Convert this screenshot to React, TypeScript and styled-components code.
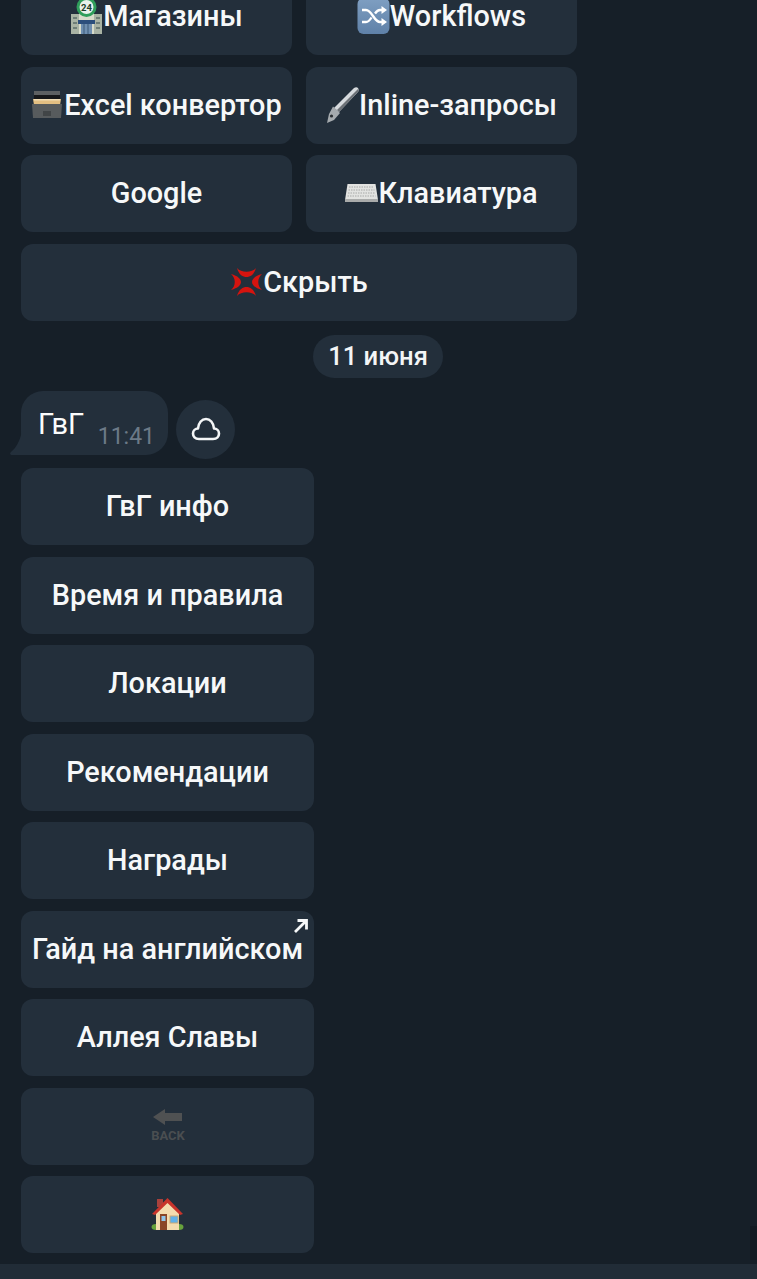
import React from "react";
import styled, { createGlobalStyle } from "styled-components";

const GlobalStyle = createGlobalStyle`
  html, body {
    margin: 0;
    padding: 0;
    background: #161f28;
  }
  * {
    box-sizing: border-box;
  }
`;

const Page = styled.div`
  position: relative;
  width: 757px;
  height: 1279px;
  display: flex;
  flex-direction: column;
  overflow: hidden;
  background: #161f28;
  font-family: Roboto, "Liberation Sans", sans-serif;
  color: #fff;
`;

const Feed = styled.div`
  flex: 1;
  min-height: 0;
  margin-top: -21.75px;
  padding-left: 21px;
  display: flex;
  flex-direction: column;
`;

const Keyboard = styled.div<{ $width: number }>`
  width: ${({ $width }) => $width}px;
  display: flex;
  flex-direction: column;
  gap: 11.5px;
`;

const KeyRow = styled.div`
  display: flex;
  gap: 14px;
`;

const KeyButton = styled.div`
  position: relative;
  flex: 1 1 0;
  min-width: 0;
  height: 77px;
  padding-bottom: 1px;
  display: flex;
  align-items: center;
  justify-content: center;
  background: #232f3b;
  border-radius: 12px;
  font-size: 28.85px;
  font-weight: 500;
  white-space: nowrap;
  color: #f6f8f9;
`;

const Glyph = styled.svg`
  flex: none;
  display: block;
  width: 33px;
  height: 38px;
`;

const Corner = styled.svg`
  position: absolute;
  top: 7px;
  right: 5px;
  width: 16px;
  height: 16px;
`;

const DateRow = styled.div`
  width: 714px;
  margin-top: 14px;
  display: flex;
  justify-content: center;
`;

const DatePill = styled.div`
  height: 43px;
  width: 130px;
  display: flex;
  align-items: center;
  justify-content: center;
  border-radius: 22px;
  background: #232f3b;
  font-size: 25.6px;
  font-weight: 500;
  color: #f3f5f6;
`;

const MessageRow = styled.div`
  height: 68px;
  margin-top: 13px;
  margin-bottom: 9.5px;
  display: flex;
  align-items: flex-start;
  gap: 8px;
`;

const Bubble = styled.div`
  position: relative;
  width: 147px;
  height: 64px;
  padding: 16px 13px 0 17px;
  display: flex;
  justify-content: space-between;
  background: #232f3b;
  border-radius: 22px 22px 22px 0;
`;

const BubbleTail = styled.svg`
  position: absolute;
  left: -11px;
  bottom: 0;
  width: 12px;
  height: 24px;
`;

const MessageText = styled.span`
  font-size: 29px;
  line-height: 34px;
  color: #fbfcfc;
`;

const MessageTime = styled.span`
  margin-top: 15px;
  font-size: 23px;
  line-height: 30px;
  color: #6c7a87;
`;

const CloudButton = styled.div`
  width: 59px;
  height: 59px;
  margin-top: 9px;
  display: flex;
  align-items: center;
  justify-content: center;
  border-radius: 50%;
  background: #232f3b;
`;

const CloudIcon = styled.svg`
  width: 30px;
  height: 24px;
`;

const BackIcon = styled.svg`
  width: 36px;
  height: 34px;
`;

const BottomBar = styled.div`
  flex: none;
  height: 15px;
  background: #212c37;
`;

const ScrollMark = styled.div`
  position: absolute;
  right: 0;
  top: 1226px;
  width: 7px;
  height: 34px;
  background: #121a22;
`;

const StoreGlyph = () => (
  <Glyph viewBox="0 0 33 38">
    <rect x="1" y="17" width="31" height="20" fill="#a9b3a4" />
    <rect x="9" y="13" width="15" height="24" fill="#d8dccb" />
    <g fill="#6f7f78">
      <rect x="3" y="20" width="4" height="2" />
      <rect x="3" y="25" width="4" height="2" />
      <rect x="3" y="30" width="4" height="2" />
      <rect x="26" y="20" width="4" height="2" />
      <rect x="26" y="25" width="4" height="2" />
      <rect x="26" y="30" width="4" height="2" />
    </g>
    <rect x="8" y="23" width="17" height="4" fill="#2c4f7c" />
    <rect x="11" y="27" width="11" height="10" fill="#6f8fb0" />
    <path d="M14 27v10M18 27v10" stroke="#3d5a78" strokeWidth="1" />
    <circle cx="16.5" cy="10" r="10" fill="#2f9e5b" />
    <circle cx="16.5" cy="10" r="7" fill="#e9f1ec" />
    <text x="16.5" y="13.5" textAnchor="middle" fontSize="9.5" fontWeight="700" fontFamily="Roboto, sans-serif" fill="#1d3d2a">24</text>
  </Glyph>
);

const ShuffleGlyph = () => (
  <Glyph viewBox="0 0 33 38">
    <defs>
      <linearGradient id="shuffleFill" x1="0" y1="0" x2="0" y2="1">
        <stop offset="0" stopColor="#7f9fc2" />
        <stop offset="1" stopColor="#5f81a8" />
      </linearGradient>
    </defs>
    <rect x="0.5" y="1" width="32" height="36" rx="6" fill="url(#shuffleFill)" />
    <path d="M5 13h4c6 0 8 12 14 12h3M5 25h4c2.500 0 4-2 5.500-4.500M18 16.500c1.400-2 3-3.500 5-3.500h3" fill="none" stroke="#fff" strokeWidth="2.400" />
    <path d="M24.500 9l5.500 4-5.500 4zM24.500 21l5.500 4-5.500 4z" fill="#fff" />
  </Glyph>
);

const CardBoxGlyph = () => (
  <Glyph viewBox="0 0 33 38">
    <rect x="3" y="5" width="26" height="5" fill="#5d6062" />
    <rect x="3" y="9" width="26" height="4" fill="#17181a" />
    <path d="M2 13h28l-1 6H3z" fill="#e3bf82" />
    <path d="M3 13h26v1.500H3z" fill="#f0dcb4" />
    <path d="M1 18h30l-1 14H2z" fill="#575b5d" />
    <rect x="12" y="25" width="8" height="5" fill="#414547" />
  </Glyph>
);

const PenGlyph = () => (
  <Glyph viewBox="0 0 33 38">
    <path d="M32 2 C33 4 33 5 31 7 L13 26 L8 22 L28 2 C29.500 1 31 1 32 2 Z" fill="#d6dadd" />
    <path d="M32 3 C33 5 33 5.500 31 7 L13 26 L11 24 Z" fill="#6c7176" />
    <path d="M7 20.500 L14 27 L8 34 L1 37 L3 28 Z" fill="#a5aaae" />
    <circle cx="5.500" cy="30" r="1.600" fill="#2b2f33" />
  </Glyph>
);

const KeyboardGlyph = () => (
  <Glyph viewBox="0 0 33 38">
    <path d="M2.500 10h28l2.500 16H0z" fill="#e2e3e1" />
    <rect x="0" y="25" width="33" height="3" fill="#a9abaa" />
    <path d="M4 13h25M3.500 16h26M3 19h27M2.500 22h28" stroke="#a7a9a8" strokeWidth="1" strokeDasharray="1.500 1" fill="none" />
  </Glyph>
);

const AngerGlyph = () => (
  <Glyph viewBox="0 0 33 38">
    <g fill="#d5140f">
      <path d="M7 5 C11 10 22 10 26 5 C24 12 20 14 16.500 14 C13 14 9 12 7 5 Z" />
      <path d="M7 33 C11 28 22 28 26 33 C24 26 20 24 16.500 24 C13 24 9 26 7 33 Z" />
      <path d="M1 11 C6 15 6 23 1 27 C8 25 11 22 11 19 C11 16 8 13 1 11 Z" />
      <path d="M32 11 C27 15 27 23 32 27 C25 25 22 22 22 19 C22 16 25 13 32 11 Z" />
    </g>
  </Glyph>
);

const HouseGlyph = () => (
  <Glyph viewBox="0 0 33 38">
    <rect x="6" y="4" width="6" height="8" fill="#a8413c" />
    <ellipse cx="5" cy="32" rx="4.500" ry="3" fill="#67a23c" />
    <ellipse cx="28" cy="32" rx="4.500" ry="3" fill="#67a23c" />
    <path d="M5 18 L16.500 6 L28 18 V35 H5 Z" fill="#f4dcaf" />
    <path d="M1 19 L16.500 3 L32 19 L29 20 L16.500 8 L4 20 Z" fill="#c8342b" />
    <rect x="9" y="19" width="7" height="16" fill="#8a4526" />
    <rect x="10.500" y="21" width="4" height="5" fill="#8fc4ea" />
    <rect x="19" y="21" width="8" height="7" fill="#5fb1ea" stroke="#c9a876" strokeWidth="1" />
  </Glyph>
);

export default function App() {
  return (
    <Page>
      <GlobalStyle />
      <Feed>
        <Keyboard $width={556}>
          <KeyRow>
            <KeyButton><StoreGlyph />Магазины</KeyButton>
            <KeyButton><ShuffleGlyph />Workflows</KeyButton>
          </KeyRow>
          <KeyRow>
            <KeyButton><CardBoxGlyph />Excel конвертор</KeyButton>
            <KeyButton><PenGlyph />Inline-запросы</KeyButton>
          </KeyRow>
          <KeyRow>
            <KeyButton>Google</KeyButton>
            <KeyButton><KeyboardGlyph />Клавиатура</KeyButton>
          </KeyRow>
          <KeyRow>
            <KeyButton><AngerGlyph />Скрыть</KeyButton>
          </KeyRow>
        </Keyboard>

        <DateRow>
          <DatePill>11 июня</DatePill>
        </DateRow>

        <MessageRow>
          <Bubble>
            <BubbleTail viewBox="0 0 12 24">
              <path d="M12 0 V24 H2 C0 24 -0.500 22 1 21 C6 17 10 10 12 0 Z" fill="#232f3b" />
            </BubbleTail>
            <MessageText>ГвГ</MessageText>
            <MessageTime>11:41</MessageTime>
          </Bubble>
          <CloudButton>
            <CloudIcon viewBox="0 0 30 24">
              <path
                d="M8 22 C4 22 2 19.500 2 16.500 C2 13.500 4.500 11.500 7 11.500 C7.500 5.500 11 2 15 2 C19 2 22.500 5.500 23 11.500 C25.500 11.500 28 13.500 28 16.500 C28 19.500 26 22 22 22 Z"
                fill="none"
                stroke="#f4f6f7"
                strokeWidth="2.600"
                strokeLinejoin="round"
              />
            </CloudIcon>
          </CloudButton>
        </MessageRow>

        <Keyboard $width={293}>
          <KeyRow><KeyButton>ГвГ инфо</KeyButton></KeyRow>
          <KeyRow><KeyButton>Время и правила</KeyButton></KeyRow>
          <KeyRow><KeyButton>Локации</KeyButton></KeyRow>
          <KeyRow><KeyButton>Рекомендации</KeyButton></KeyRow>
          <KeyRow><KeyButton>Награды</KeyButton></KeyRow>
          <KeyRow>
            <KeyButton>
              Гайд на английском
              <Corner viewBox="0 0 16 16">
                <path d="M2 14 L13 3 M4.500 2.500 H13.500 V11.500" fill="none" stroke="#f6f8f9" strokeWidth="2.800" />
              </Corner>
            </KeyButton>
          </KeyRow>
          <KeyRow><KeyButton>Аллея Славы</KeyButton></KeyRow>
          <KeyRow>
            <KeyButton>
              <BackIcon viewBox="0 0 36 34">
                <path d="M3 8 L15 0 V4 H32 V12 H15 V16 Z" fill="#4f5152" />
                <text x="18" y="31" textAnchor="middle" fontSize="13" fontWeight="700" fontFamily="Roboto, sans-serif" fill="#4a4e51">BACK</text>
              </BackIcon>
            </KeyButton>
          </KeyRow>
          <KeyRow>
            <KeyButton><HouseGlyph /></KeyButton>
          </KeyRow>
        </Keyboard>
      </Feed>
      <ScrollMark />
      <BottomBar />
    </Page>
  );
}
